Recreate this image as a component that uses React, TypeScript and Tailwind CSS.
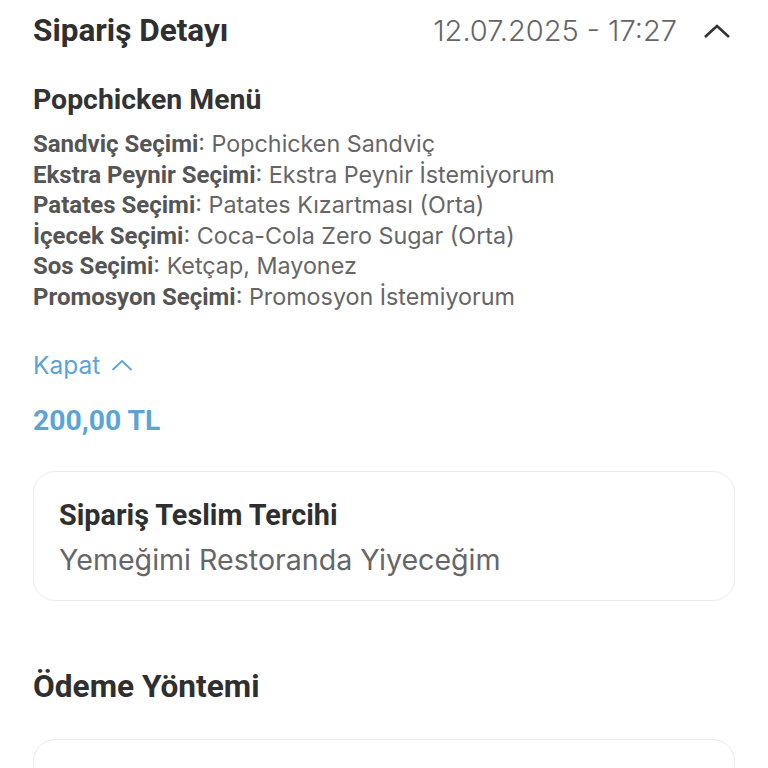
const options = [
  { label: 'Sandviç Seçimi', value: 'Popchicken Sandviç' },
  { label: 'Ekstra Peynir Seçimi', value: 'Ekstra Peynir İstemiyorum' },
  { label: 'Patates Seçimi', value: 'Patates Kızartması (Orta)' },
  { label: 'İçecek Seçimi', value: 'Coca-Cola Zero Sugar (Orta)' },
  { label: 'Sos Seçimi', value: 'Ketçap, Mayonez' },
  { label: 'Promosyon Seçimi', value: 'Promosyon İstemiyorum' },
];

const bold = "font-['Roboto',sans-serif] font-bold";
const light = "font-['Inter',sans-serif]";

export default function App() {
  return (
    <div className="min-h-[768px] w-[768px] overflow-hidden bg-white px-[33px] text-[#333]">
      <div className="flex h-[62px] items-center justify-between">
        <h1 className={`${bold} text-[31.5px] leading-[38px] text-[#2f2f2f]`}>Sipariş Detayı</h1>
        <div className="flex items-center gap-[26px]">
          <span className={`${light} text-[29px] font-light leading-[38px] text-[#666]`}>12.07.2025 - 17:27</span>
          <svg width="28" height="16" viewBox="0 0 28 16" className="mr-[4px]">
            <path d="M2 14 L14 3 L26 14" fill="none" stroke="#333" strokeWidth="2.6" />
          </svg>
        </div>
      </div>

      <h2 className={`${bold} mt-[21px] text-[28.4px] leading-[34px] text-[#333]`}>Popchicken Menü</h2>

      <div className="mt-[11px] flex flex-col">
        {options.map((o) => (
          <div key={o.label} className="h-[30.6px] text-[24px] leading-[30.6px] text-[#666]">
            <span className={`${bold} text-[#555]`}>{o.label}</span>
            <span className={`${light} text-[23.3px]`}>: {o.value}</span>
          </div>
        ))}
      </div>

      <button className={`${light} mt-[38px] flex h-[30px] items-center gap-[11px] text-[24.5px] leading-[30px] text-[#5aa5d6]`}>
        Kapat
        <svg width="22" height="12" viewBox="0 0 22 12">
          <path d="M1.5 11 L11 2 L20.5 11" fill="none" stroke="#5aa5d6" strokeWidth="1.8" />
        </svg>
      </button>

      <div className={`${bold} mt-[24px] text-[28.3px] leading-[34px] text-[#5aa5d6]`}>200,00 TL</div>

      <div className="mt-[33px] h-[130px] rounded-[22px] border border-[#ececec] bg-white px-[25px] pt-[25px]">
        <div className={`${bold} text-[28.8px] leading-[36px] text-[#2f2f2f]`}>Sipariş Teslim Tercihi</div>
        <div className={`${light} mt-[9px] text-[28.6px] leading-[36px] text-[#666]`}>Yemeğimi Restoranda Yiyeceğim</div>
      </div>

      <h2 className={`${bold} mt-[67px] text-[31.6px] leading-[38px] text-[#2f2f2f]`}>Ödeme Yöntemi</h2>

      <div className="mt-[33px] h-[120px] rounded-[22px] border border-[#ececec] bg-white" />
    </div>
  );
}
